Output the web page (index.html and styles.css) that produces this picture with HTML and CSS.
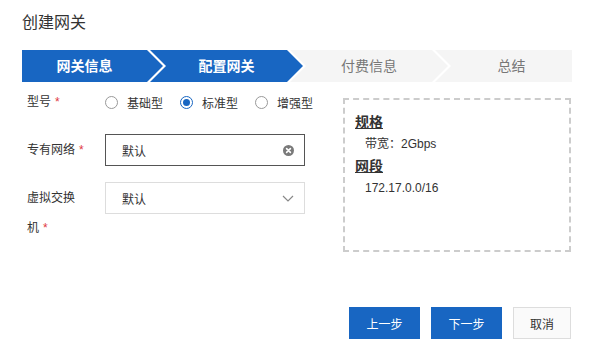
FILE: index.html
```html
<!DOCTYPE html>
<html lang="zh">
<head>
  <meta charset="UTF-8">
  <title>创建网关</title>
  <link rel="stylesheet" href="styles.css">
</head>
<body>

<div class="dialog">
  <h1 class="title">创建网关</h1>

  <div class="steps">
    <div class="step step-first done">网关信息</div>
    <div class="step step-mid done">配置网关</div>
    <div class="step step-mid">付费信息</div>
    <div class="step step-last">总结</div>
  </div>

  <div class="content">
    <div class="form">
      <div class="form-row">
        <div class="form-label">型号<span class="req">*</span></div>
        <div class="radios">
          <label class="radio-item"><span class="radio"></span>基础型</label>
          <label class="radio-item"><span class="radio checked"></span>标准型</label>
          <label class="radio-item"><span class="radio"></span>增强型</label>
        </div>
      </div>

      <div class="form-row">
        <div class="form-label">专有网络<span class="req">*</span></div>
        <div class="field field-active">
          <span class="field-text">默认</span>
          <span class="clear-icon">
            <svg width="11" height="11" viewBox="0 0 11 11">
              <circle cx="5.5" cy="5.5" r="5.5" fill="#7a7a7a"/>
              <path d="M3.6 3.6 L7.4 7.4 M7.4 3.6 L3.6 7.4" stroke="#fff" stroke-width="1.6" stroke-linecap="round"/>
            </svg>
          </span>
        </div>
      </div>

      <div class="form-row">
        <div class="form-label">虚拟交换机<span class="req">*</span></div>
        <div class="field">
          <span class="field-text">默认</span>
          <svg class="caret" width="12" height="7" viewBox="0 0 12 7">
            <path d="M1 1 L6 6 L11 1" fill="none" stroke="#888" stroke-width="1.2"/>
          </svg>
        </div>
      </div>
    </div>

    <div class="summary">
      <div class="summary-head">规格</div>
      <div class="summary-item">带宽：2Gbps</div>
      <div class="summary-head">网段</div>
      <div class="summary-item">172.17.0.0/16</div>
    </div>
  </div>

  <div class="footer">
    <button class="btn btn-primary">上一步</button>
    <button class="btn btn-primary">下一步</button>
    <button class="btn btn-default">取消</button>
  </div>
</div>

</body>
</html>
```

FILE: styles.css
```css
body {
  margin: 0;
  background: #fff;
  font-family: "Liberation Sans", "Noto Sans CJK SC", sans-serif;
  color: #333;
}
.dialog {
  padding: 11px 22px 0;
}
.title {
  margin: 0;
  font-size: 16px;
  font-weight: normal;
  line-height: 24px;
  color: #333;
}

/* 步骤条 */
.steps {
  display: flex;
  margin-top: 15px;
  height: 32px;
}
.step {
  height: 32px;
  line-height: 32px;
  font-size: 14px;
  text-align: center;
  background: #f5f5f5;
  color: #777;
  box-sizing: border-box;
}
.step.done {
  background: #1866c2;
  color: #fff;
  font-weight: bold;
}
.step-first {
  width: 141px;
  padding-right: 16px;
  clip-path: polygon(0 0, calc(100% - 16px) 0, 100% 50%, calc(100% - 16px) 100%, 0 100%);
}
.step-mid {
  margin-left: -13px;
  padding: 0 16px;
  clip-path: polygon(0 0, calc(100% - 16px) 0, 100% 50%, calc(100% - 16px) 100%, 0 100%, 16px 50%);
}
.step-mid:nth-child(2) {
  width: 153px;
}
.step-mid:nth-child(3) {
  width: 158px;
}
.step-last {
  flex: 1;
  margin-left: -13px;
  padding-left: 16px;
  clip-path: polygon(0 0, 100% 0, 100% 100%, 0 100%, 16px 50%);
}

/* 表单 */
.content {
  display: flex;
  align-items: flex-start;
  margin-top: 4px;
}
.form {
  width: 283px;
  flex-shrink: 0;
  padding-left: 5px;
}
.form-row {
  display: flex;
  align-items: flex-start;
  margin-bottom: 16px;
  font-size: 12px;
}
.form-label {
  width: 58px;
  flex-shrink: 0;
  margin-right: 20px;
  line-height: 30px;
  padding-top: 1px;
  color: #333;
}
.req {
  color: #e0383e;
  margin-left: 4px;
}
.radios {
  display: flex;
  align-items: center;
  height: 32px;
  white-space: nowrap;
}
.radio-item {
  display: flex;
  align-items: center;
  flex-shrink: 0;
  margin-right: 17px;
  color: #333;
}
.radio {
  width: 13px;
  height: 13px;
  border: 1px solid #999;
  border-radius: 50%;
  box-sizing: border-box;
  margin-right: 9px;
  position: relative;
}
.radio.checked {
  border-color: #1866c2;
}
.radio.checked::after {
  content: "";
  position: absolute;
  left: 2px;
  top: 2px;
  width: 7px;
  height: 7px;
  border-radius: 50%;
  background: #1866c2;
}
.field {
  display: flex;
  align-items: center;
  justify-content: space-between;
  width: 200px;
  height: 32px;
  box-sizing: border-box;
  border: 1px solid #ddd;
  padding: 0 10px 0 16px;
}
.field-active {
  border-color: #555;
}
.field-text {
  color: #333;
}
.clear-icon {
  display: flex;
}

/* 右侧信息框 */
.summary {
  width: 228px;
  height: 154px;
  margin-left: 33px;
  margin-top: 12px;
  box-sizing: border-box;
  border: 2px dashed #ccc;
  padding: 11px 10px 0;
}
.summary-head {
  font-size: 14px;
  font-weight: bold;
  line-height: 22px;
  text-decoration: underline;
  color: #333;
}
.summary-item {
  font-size: 12px;
  line-height: 22px;
  padding-left: 10px;
  color: #333;
}

/* 底部按钮 */
.footer {
  display: flex;
  justify-content: flex-end;
  gap: 11px;
  margin-top: 48px;
  padding-right: 1px;
}
.btn {
  height: 32px;
  font-size: 12px;
  font-family: inherit;
  border: 1px solid transparent;
  cursor: pointer;
}
.btn-primary {
  width: 71px;
  background: #1866c2;
  color: #fff;
}
.btn-default {
  width: 58px;
  background: #fafafa;
  border-color: #ddd;
  color: #333;
}
```
